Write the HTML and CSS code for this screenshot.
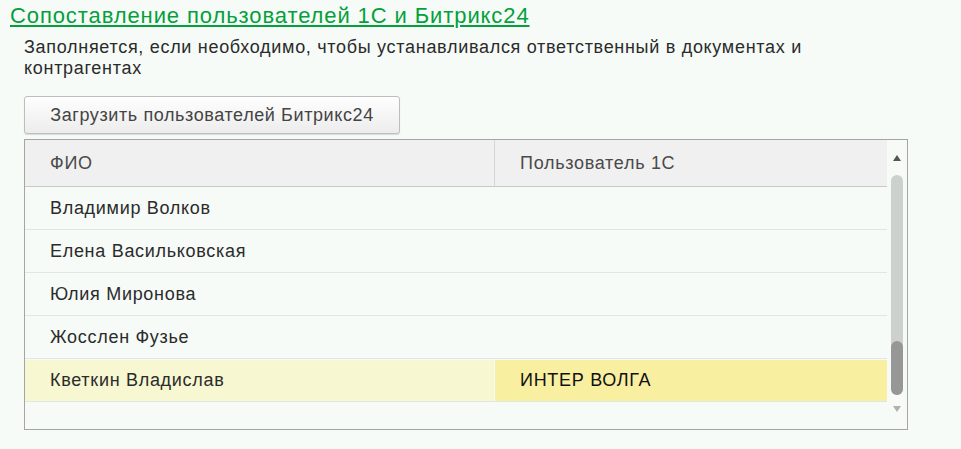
FILE: index.html
```html
<!DOCTYPE html>
<html lang="ru">
<head>
  <meta charset="UTF-8" />
  <title>Сопоставление пользователей</title>
  <link rel="stylesheet" href="styles.css">
</head>
<body>

  <a class="title" href="#">Сопоставление пользователей 1С и Битрикс24</a>

  <div class="group">
    <p class="hint">Заполняется, если необходимо, чтобы устанавливался ответственный в документах и контрагентах</p>
    <button class="load">Загрузить пользователей Битрикс24</button>

    <div class="grid">
      <div class="table">
        <div class="row head">
          <div class="cell">ФИО</div>
          <div class="cell">Пользователь 1С</div>
        </div>
        <div class="row">
          <div class="cell">Владимир Волков</div>
          <div class="cell"></div>
        </div>
        <div class="row">
          <div class="cell">Елена Васильковская</div>
          <div class="cell"></div>
        </div>
        <div class="row">
          <div class="cell">Юлия Миронова</div>
          <div class="cell"></div>
        </div>
        <div class="row">
          <div class="cell">Жосслен Фузье</div>
          <div class="cell"></div>
        </div>
        <div class="row selected">
          <div class="cell">Кветкин Владислав</div>
          <div class="cell current">ИНТЕР ВОЛГА</div>
        </div>
      </div>
      <div class="scroll">
        <span class="arrow up"></span>
        <div class="track"><div class="thumb"></div></div>
        <span class="arrow down"></span>
      </div>
    </div>
  </div>

</body>
</html>
```

FILE: styles.css
```css
body {
  font-family: "Liberation Sans", Arial, sans-serif;
  font-size: 18px;
  letter-spacing: 0.7px;
  background: #f6fbf8;
  margin: 0;
  padding: 3px 10px 0;
  color: #2b2b2b;
}

.title {
  display: inline-block;
  font-size: 22px;
  letter-spacing: 0.9px;
  color: #04a03b;
  text-decoration: underline;
  line-height: 25px;
}

.group {
  width: 884px;
  margin-left: 14px;
}

.hint {
  line-height: 21px;
  margin: 9px 0 0;
}

.load {
  margin-top: 17px;
  height: 38px;
  width: 376px;
  padding: 0;
  font-family: inherit;
  font-size: 18px;
  letter-spacing: 0.6px;
  color: #444;
  background: linear-gradient(#fefefe, #ececec);
  border: 1px solid #bdbdbd;
  border-radius: 3px;
  box-shadow: 0 1px 1px rgba(0,0,0,0.12);
}

.grid {
  display: flex;
  margin-top: 5px;
  height: 289px;
  border: 1px solid #a5a5a5;
  background: #f6fbf8;
}

.table { flex: 1; }

.row {
  display: grid;
  grid-template-columns: 470px 1fr;
  height: 42px;
  border-bottom: 1px solid #dfe6e3;
}

.row.head {
  height: 46px;
  background: #f0f0f0;
  border-bottom-color: #c8c8c8;
}

.cell {
  display: flex;
  align-items: center;
  padding-left: 25px;
}

.head .cell { color: #4a4a4a; }
.head .cell:first-child { border-right: 1px solid #d6d6d6; }

.selected { background: #f7f8d1; }
.selected .cell { border-top: 1px solid #f6fbf8; }
.selected .cell:first-child { border-right: 1px solid #f6fbf8; }
.current { background: #f8efa1; color: #111; }

.scroll {
  width: 20px;
  display: flex;
  flex-direction: column;
  align-items: center;
}

.arrow {
  width: 0;
  height: 0;
  border-left: 4px solid transparent;
  border-right: 4px solid transparent;
}

.arrow.up {
  margin-top: 15px;
  border-bottom: 6px solid #555;
}

.arrow.down {
  margin-top: 11px;
  border-top: 6px solid #b0b0b0;
}

.track {
  margin-top: 14px;
  width: 12px;
  height: 220px;
  border-radius: 6px;
  background: #cdd1cd;
  display: flex;
  flex-direction: column;
  justify-content: flex-end;
}

.thumb {
  height: 54px;
  border-radius: 6px;
  background: #979797;
}
```
